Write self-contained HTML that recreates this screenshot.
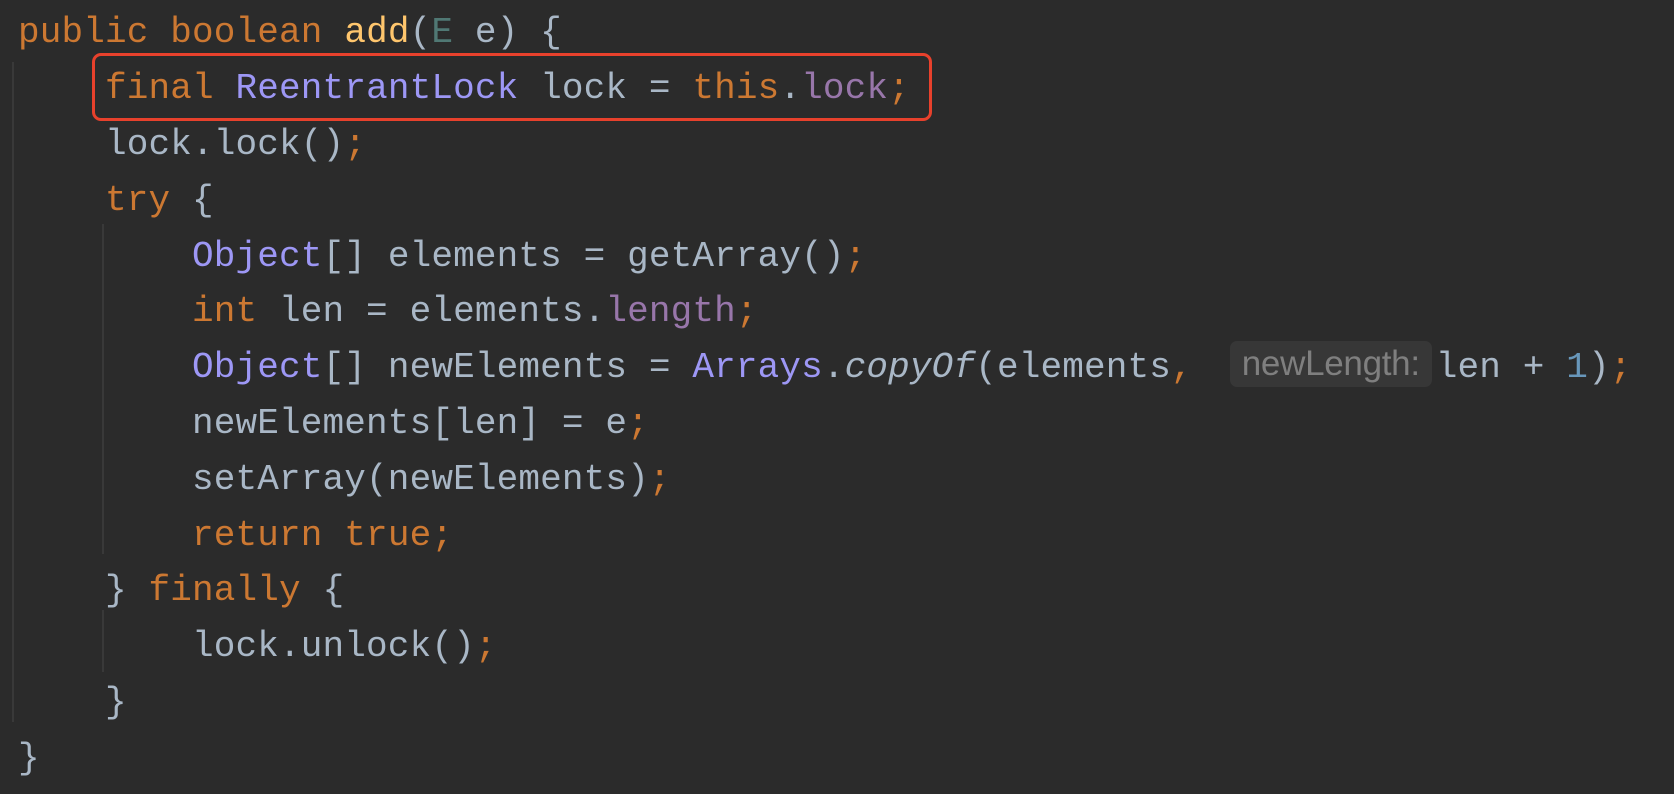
<!DOCTYPE html>
<html><head><meta charset="utf-8"><style>
html,body{margin:0;padding:0;}
body{width:1674px;height:794px;background:#2b2b2b;overflow:hidden;position:relative;font-family:"Liberation Mono",monospace;font-size:36px;color:#a9b7c6;letter-spacing:0.15px}
.l{position:absolute;left:18px;white-space:pre;height:56px;line-height:56px;}
.k{color:#cc7832}.m{color:#ffc66d}.t{color:#507874}.c{color:#9d97f5}.f{color:#9876aa}.n{color:#6897bb}.i{font-style:italic}
.h{display:inline-block;background:#373737;color:#7f7f7f;font-family:"Liberation Sans",sans-serif;font-size:35px;letter-spacing:-0.3px;line-height:46px;height:46px;padding:0 12px;border-radius:7px;vertical-align:middle;margin-left:37px;margin-right:4px;position:relative;top:-3px}
.g{position:absolute;width:2px;background:#393939}
.box{position:absolute;left:92px;top:53px;width:834px;height:62px;border:3px solid #e8412c;border-radius:9px}
</style></head><body>
<div class="g" style="left:12px;top:62px;height:660px"></div>
<div class="g" style="left:102px;top:224px;height:330px"></div>
<div class="g" style="left:102px;top:610px;height:62px"></div>
<div class="l" style="top:5px"><span class="k">public boolean </span><span class="m">add</span>(<span class="t">E</span> e) {</div>
<div class="l" style="top:61px">    <span class="k">final </span><span class="c">ReentrantLock</span> lock = <span class="k">this</span>.<span class="f">lock</span><span class="k">;</span></div>
<div class="l" style="top:117px">    lock.lock()<span class="k">;</span></div>
<div class="l" style="top:173px">    <span class="k">try </span>{</div>
<div class="l" style="top:229px">        <span class="c">Object</span>[] elements = getArray()<span class="k">;</span></div>
<div class="l" style="top:284px">        <span class="k">int </span>len = elements.<span class="f">length</span><span class="k">;</span></div>
<div class="l" style="top:340px">        <span class="c">Object</span>[] newElements = <span class="c">Arrays</span>.<span class="i">copyOf</span>(elements<span class="k">,</span><span class="h">newLength:</span>len + <span class="n">1</span>)<span class="k">;</span></div>
<div class="l" style="top:396px">        newElements[len] = e<span class="k">;</span></div>
<div class="l" style="top:452px">        setArray(newElements)<span class="k">;</span></div>
<div class="l" style="top:508px">        <span class="k">return true;</span></div>
<div class="l" style="top:563px">    } <span class="k">finally </span>{</div>
<div class="l" style="top:619px">        lock.unlock()<span class="k">;</span></div>
<div class="l" style="top:675px">    }</div>
<div class="l" style="top:731px">}</div>
<div class="box"></div>
</body></html>
